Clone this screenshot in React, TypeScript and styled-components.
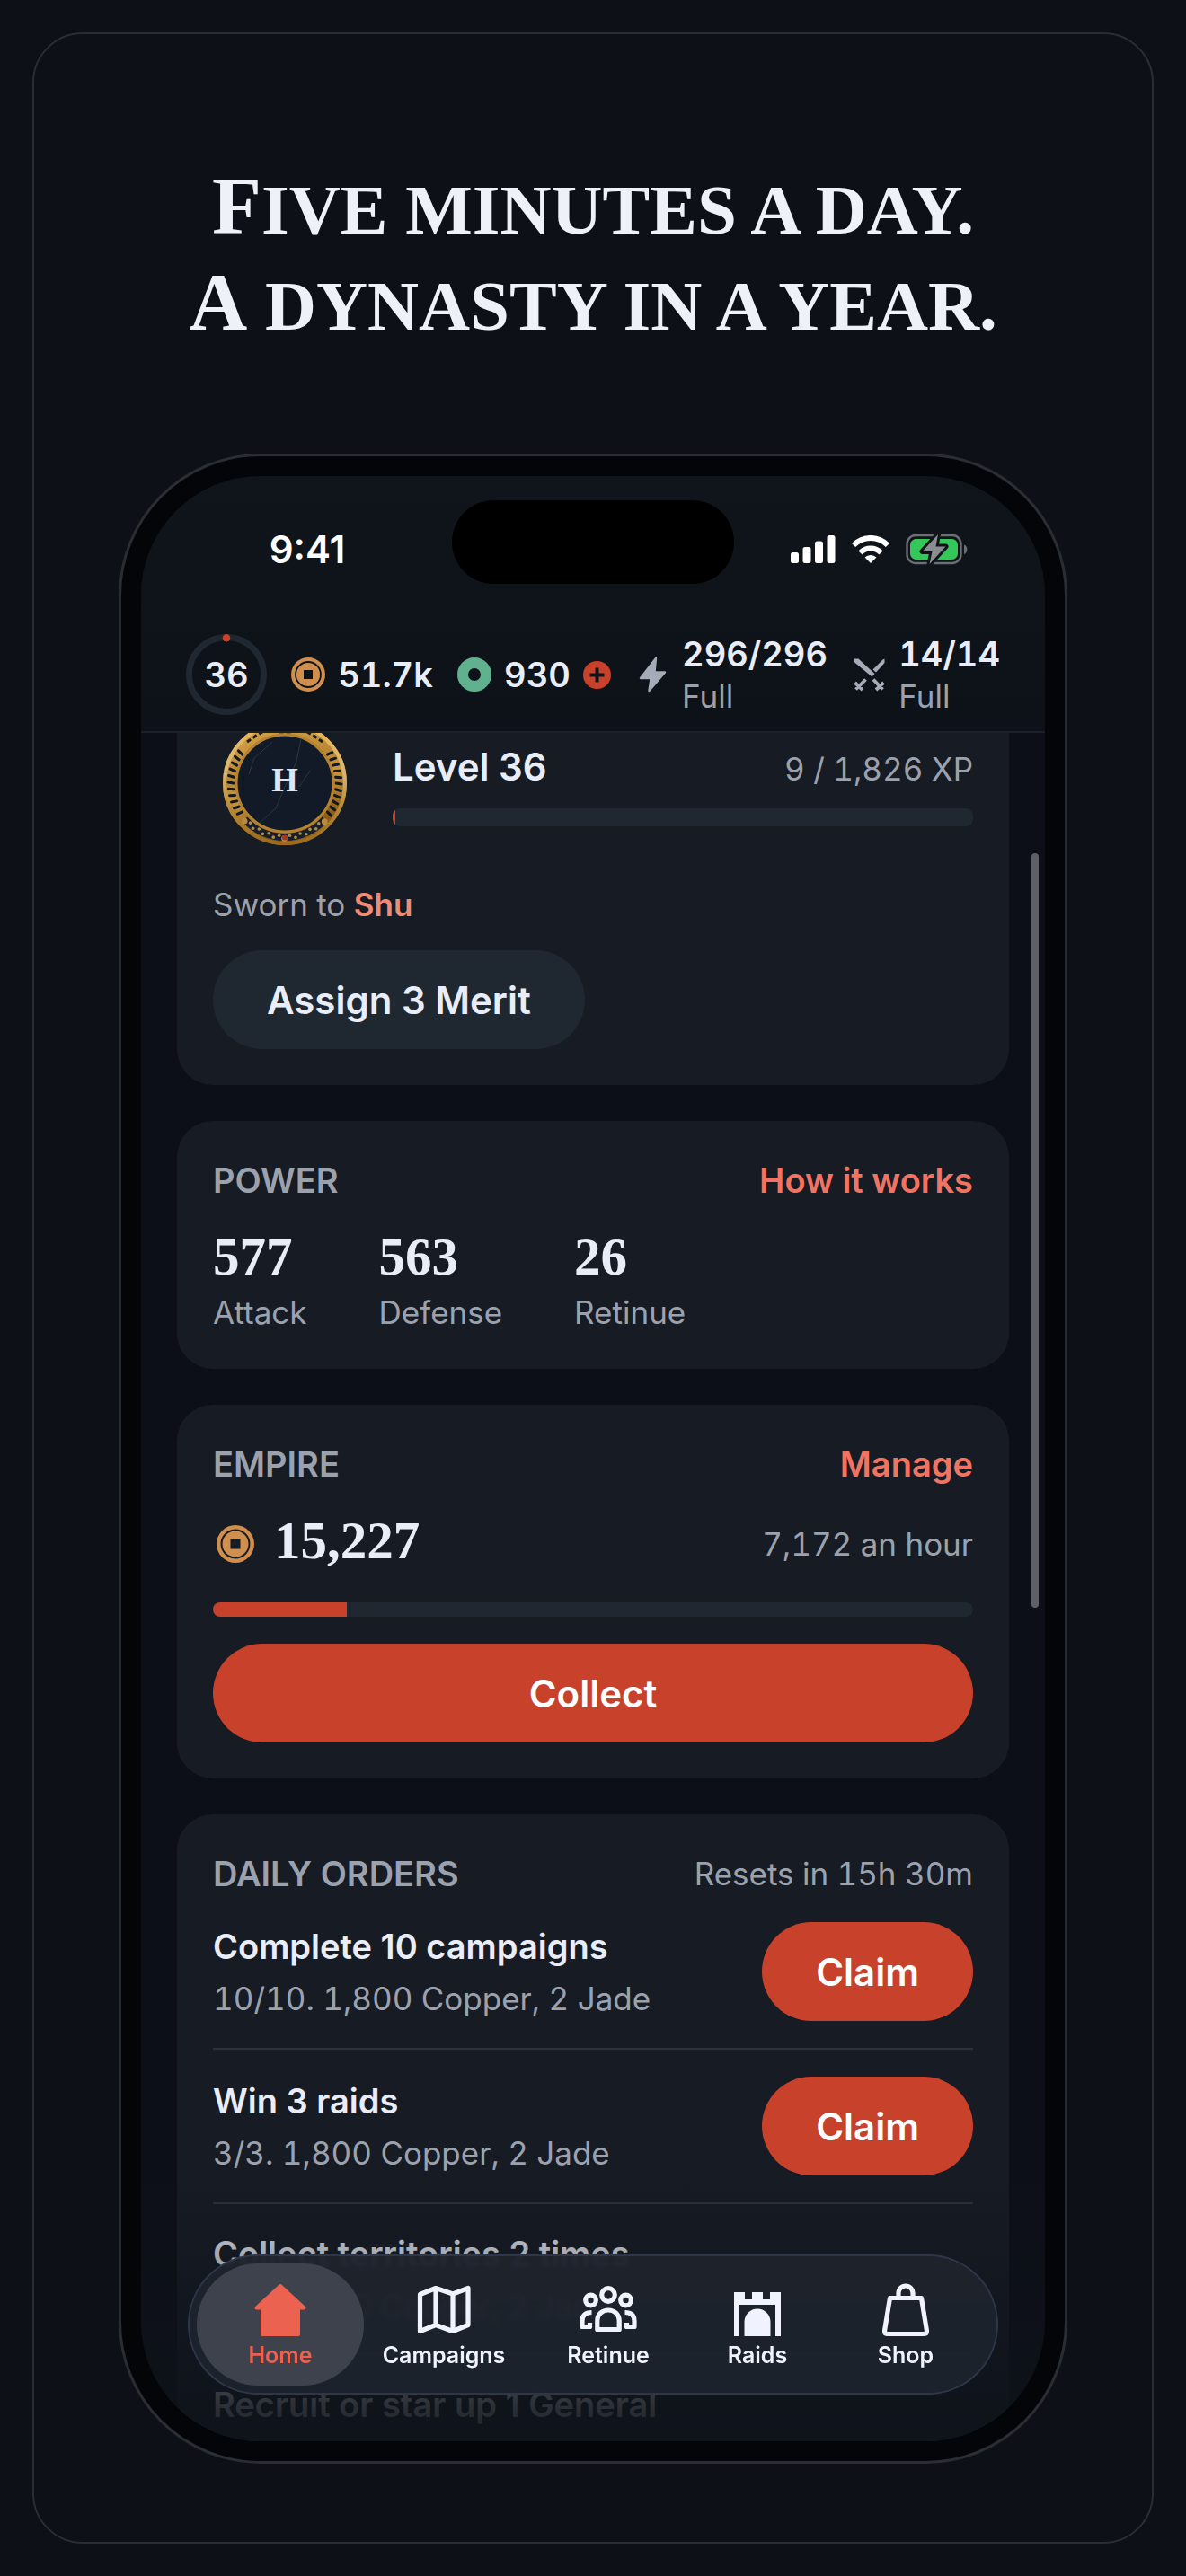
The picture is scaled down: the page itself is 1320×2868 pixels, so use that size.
import React from "react";
import styled, { createGlobalStyle } from "styled-components";

const color = {
  page: "#0d1017",
  frame: "#2a2d33",
  bezel: "#040508",
  bar: "#0e1219",
  screen: "#0c0f17",
  card: "#171b24",
  raised: "#1f2831",
  line: "#2c323b",
  text: "#e9edf7",
  muted: "#9ba2ae",
  accent: "#c8412b",
  link: "#f07461",
  copper: "#d08f4d",
  jade: "#5fb28d",
};

const sans = `Inter, "Liberation Sans", sans-serif`;
const serif = `"Liberation Serif", "Times New Roman", serif`;

const GlobalStyle = createGlobalStyle`
  *, *::before, *::after { box-sizing: border-box; }
  body { margin: 0; background: ${color.page}; font-family: ${sans}; color: ${color.text}; }
  h1, h2, h3, p, ul { margin: 0; padding: 0; }
  ul { list-style: none; }
  button { border: 0; padding: 0; background: none; color: inherit; font: inherit; cursor: pointer; }
  a { color: inherit; text-decoration: none; }
  svg { display: block; flex: none; }
`;

const Page = styled.main`
  display: flex;
  min-height: 100vh;
  padding: 36px;
`;

const Frame = styled.section`
  flex: 1;
  display: flex;
  flex-direction: column;
  align-items: center;
  gap: 111px;
  min-width: 0;
  padding: 142px 60px 84px;
  border: 2px solid ${color.frame};
  border-radius: 56px;
`;

const Headline = styled.h1`
  font-family: ${serif};
  font-size: 79px;
  line-height: 107px;
  font-weight: 700;
  text-align: center;
  text-transform: uppercase;
  color: #eef1f8;
`;

const HeadlineLine = styled.span`
  display: block;
  &::first-letter {
    font-size: 90px;
    line-height: 1;
  }
`;

const Phone = styled.div`
  width: 100%;
  max-width: 1056px;
  padding: 22px;
  border: 3px solid ${color.frame};
  border-radius: 158px;
  background: ${color.bezel};
`;

const Screen = styled.div`
  position: relative;
  display: flex;
  flex-direction: column;
  aspect-ratio: 1006 / 2188;
  overflow: hidden;
  border-radius: 133px;
  background: ${color.screen};
`;

const TopBar = styled.header`
  flex: none;
  padding-bottom: 4px;
  border-bottom: 2px solid #1c2129;
  background: linear-gradient(#10141b, #0d1118);
`;

const StatusBar = styled.div`
  display: grid;
  grid-template-columns: 1fr 314px 1fr;
  justify-items: center;
  align-items: center;
  height: 162px;
  padding: 0 24px;
`;

const Clock = styled.time`
  font-size: 42px;
  font-weight: 600;
  color: #fff;
`;

const Island = styled.div`
  align-self: start;
  width: 100%;
  height: 93px;
  margin-top: 27px;
  border-radius: 47px;
  background: #000;
`;

const StatusIcons = styled.div`
  display: flex;
  align-items: center;
  gap: 18px;
`;

const Stats = styled.div`
  display: flex;
  align-items: center;
  justify-content: space-between;
  height: 118px;
  padding: 0 50px;
`;

const Stat = styled.div`
  display: flex;
  align-items: center;
  gap: 14px;
`;

const StatValue = styled.div`
  font-size: 38px;
  line-height: 48px;
  font-weight: 600;
  font-variant-numeric: tabular-nums;
`;

const Muted = styled.div`
  font-size: 35px;
  line-height: 46px;
  font-weight: 400;
  color: ${color.muted};
  font-variant-numeric: tabular-nums;
`;

const LevelRing = styled.div`
  display: grid;
  place-items: center;
  > * { grid-area: 1 / 1; }
`;

const Viewport = styled.div`
  flex: 1;
  min-height: 0;
  overflow: hidden;
`;

const Scrolled = styled.div`
  display: flex;
  flex-direction: column;
  gap: 40px;
  margin-top: -64px;
  padding: 0 40px;
`;

const Card = styled.section`
  padding: 40px;
  border-radius: 40px;
  background: ${color.card};
`;

const ProfileCard = styled(Card)`
  display: flex;
  flex-direction: column;
  align-items: flex-start;
  gap: 28px;
`;

const Profile = styled.div`
  display: flex;
  align-items: center;
  gap: 40px;
  width: 100%;
`;

const ProfileInfo = styled.div`
  flex: 1;
  display: flex;
  flex-direction: column;
  gap: 20px;
`;

const Split = styled.div`
  display: flex;
  align-items: baseline;
  justify-content: space-between;
`;

const LevelName = styled.h2`
  font-size: 42px;
  line-height: 52px;
  font-weight: 600;
`;

const Track = styled.div<{ $tall?: boolean }>`
  height: ${(p) => (p.$tall ? 20 : 16)}px;
  overflow: hidden;
  border-radius: 8px;
  background: ${color.raised};
`;

const Fill = styled.div`
  height: 100%;
  background: ${color.accent};
`;

const Allegiance = styled.strong`
  font-weight: 600;
  color: #f08b76;
`;

const Button = styled.button<{ $quiet?: boolean; $wide?: boolean }>`
  flex: none;
  width: ${(p) => (p.$wide ? "100%" : "auto")};
  height: 110px;
  padding: 0 60px;
  border-radius: 55px;
  background: ${(p) => (p.$quiet ? color.raised : color.accent)};
  color: ${(p) => (p.$quiet ? color.text : "#fff")};
  font-size: 42px;
  font-weight: 600;
`;

const CardHead = styled.div`
  display: flex;
  align-items: center;
  justify-content: space-between;
  margin-bottom: 28px;
`;

const CardTitle = styled.h2`
  font-size: 38px;
  line-height: 52px;
  font-weight: 600;
  color: ${color.muted};
  text-transform: uppercase;
`;

const CardLink = styled.a`
  font-size: 38px;
  line-height: 52px;
  font-weight: 600;
  color: ${color.link};
`;

const Figures = styled.ul`
  display: flex;
  gap: 80px;
`;

const Figure = styled.li`
  display: flex;
  flex-direction: column;
  gap: 8px;
`;

const BigNumber = styled.div`
  font-family: ${serif};
  font-size: 59px;
  line-height: 62px;
  font-weight: 700;
`;

const Stack = styled.div`
  display: flex;
  flex-direction: column;
  gap: 30px;
`;

const Income = styled.div`
  display: flex;
  align-items: center;
  gap: 22px;
  padding-left: 4px;
  ${BigNumber} { padding-bottom: 8px; }
  ${Muted} { margin-left: auto; }
`;

const Orders = styled.ul`
  display: flex;
  flex-direction: column;
`;

const Order = styled.li`
  display: flex;
  align-items: center;
  justify-content: space-between;
  padding-bottom: 30px;
  & + & {
    padding-top: 30px;
    border-top: 2px solid ${color.line};
  }
`;

const OrderText = styled.div`
  display: flex;
  flex-direction: column;
  gap: 10px;
`;

const OrderName = styled.h3`
  font-size: 38px;
  line-height: 50px;
  font-weight: 600;
`;

const ScrollThumb = styled.div`
  position: absolute;
  top: 420px;
  right: 7px;
  width: 8px;
  height: 840px;
  border-radius: 4px;
  background: #5d6066;
`;

const Fade = styled.div`
  position: absolute;
  inset: auto 0 0;
  height: 300px;
  background: linear-gradient(
    rgba(14, 18, 25, 0),
    rgba(14, 18, 25, 0.3) 30%,
    rgba(14, 18, 25, 0.86) 86%,
    rgba(14, 18, 25, 0.95)
  );
  pointer-events: none;
`;

const TabBar = styled.nav`
  position: absolute;
  inset: auto 52px 52px;
  display: grid;
  grid-template-columns: 186fr 178fr 188fr 144fr 186fr;
  height: 156px;
  padding: 8px;
  border: 2px solid #2e3749;
  border-radius: 78px;
  background: rgba(30, 35, 44, 0.95);
  backdrop-filter: blur(2px);
`;

const Tab = styled.a<{ $active?: boolean }>`
  display: flex;
  flex-direction: column;
  align-items: center;
  justify-content: center;
  gap: 4px;
  padding-top: 4px;
  border-radius: 68px;
  background: ${(p) => (p.$active ? "#3d424c" : "transparent")};
  color: ${(p) => (p.$active ? "#eb6250" : "#f0f3fd")};
  font-size: 25px;
  line-height: 32px;
  font-weight: 600;
`;

/* ---------- drawings ---------- */

const Signal = () => (
  <svg width="50" height="31" viewBox="0 0 50 31" fill="#fff" aria-hidden="true">
    <rect x="0" y="19" width="9" height="12" rx="2.5" />
    <rect x="13.5" y="13" width="9" height="18" rx="2.5" />
    <rect x="27" y="6.5" width="9" height="24.5" rx="2.5" />
    <rect x="40.5" y="0" width="9" height="31" rx="2.5" />
  </svg>
);

const Wifi = () => (
  <svg width="42" height="31" viewBox="0 0 42 31" aria-hidden="true">
    <g fill="none" stroke="#fff" strokeWidth="6">
      <path d="M2 11 A26.5 26.5 0 0 1 40 11" />
      <path d="M9.5 19.5 A16 16 0 0 1 32.5 19.5" />
    </g>
    <path d="M21 31 L14.5 24.6 A9.2 9.2 0 0 1 27.5 24.6 Z" fill="#fff" />
  </svg>
);

const Battery = () => (
  <svg width="69" height="35" viewBox="0 0 69 35" aria-hidden="true">
    <rect x="1.5" y="2" width="60" height="31" rx="9.5" fill="none" stroke="#6b6e73" strokeWidth="2.4" />
    <path d="M65 12.5 C69.5 14 69.5 21.500 65 23 Z" fill="#6b6e73" />
    <rect x="5" y="6" width="53" height="23" rx="6.5" fill="#34c759" />
    <path
      d="M36 1 L18.5 20 H29.500 L26.500 34 L44.500 14.500 H33.500 Z"
      fill="#8b8e91"
      stroke="#0f131a"
      strokeWidth="6"
      strokeLinejoin="round"
      paintOrder="stroke"
    />
  </svg>
);

const Copper = ({ size, hole }: { size: number; hole: string }) => (
  <svg width={size} height={size} viewBox="0 0 38 38" aria-hidden="true">
    <circle cx="19" cy="19" r="19" fill={color.copper} />
    <circle cx="19" cy="19" r="14" fill="none" stroke={hole} strokeWidth="1.8" />
    <rect x="14" y="14" width="10" height="10" fill={hole} />
  </svg>
);

const Jade = () => (
  <svg width="38" height="38" viewBox="0 0 38 38" aria-hidden="true">
    <circle cx="19" cy="19" r="13" fill="none" stroke={color.jade} strokeWidth="12" />
  </svg>
);

const Plus = () => (
  <svg width="31" height="31" viewBox="0 0 31 31" aria-hidden="true">
    <circle cx="15.5" cy="15.5" r="15.5" fill={color.accent} />
    <path d="M15.5 7.5 V23.5 M7.5 15.5 H23.5" stroke={color.bar} strokeWidth="4" />
  </svg>
);

const Bolt = () => (
  <svg width="38" height="40" viewBox="0 0 38 40" aria-hidden="true">
    <path
      d="M23 2 L6 24 H17.500 L15.500 38 L33 17.500 H21.500 Z"
      fill="#a5abb7"
      stroke="#a5abb7"
      strokeWidth="2.4"
      strokeLinejoin="round"
    />
  </svg>
);

const Swords = () => (
  <svg width="38" height="38" viewBox="0 0 38 38" aria-hidden="true">
    <path d="M2.500 1.500 H7.500 L25.500 18 L22.500 21.500 L2.500 5 Z" fill="#a5abb7" />
    <path d="M36.500 1.500 V6 L27 16.500 L23.500 13.500 L34.500 2.500 Z" fill="#a5abb7" />
    <path
      d="M15.500 24.500 L4.500 35.500 M3.500 28 L12 36 M24 24.500 L34.500 35.500 M35.500 28 L27 36"
      fill="none"
      stroke="#a5abb7"
      strokeWidth="3.800"
    />
  </svg>
);

const Ring = () => (
  <svg width="90" height="90" viewBox="0 0 90 90" aria-hidden="true">
    <circle cx="45" cy="45" r="41.5" fill="none" stroke={color.raised} strokeWidth="7" />
    <circle cx="45" cy="4.2" r="4.2" fill={color.accent} />
  </svg>
);

const spokes = Array.from({ length: 11 }, (_, i) => -34 + i * 6.8);
const leaves = Array.from({ length: 17 }, (_, i) => 44 + i * 5.8);

const polar = (deg: number, r: number) => {
  const a = (deg * Math.PI) / 180;
  return { x: 80 + r * Math.cos(a), y: 80 + r * Math.sin(a) };
};

const Spoke = ({ deg }: { deg: number }) => {
  const a = polar(deg, 57);
  const b = polar(deg + 1, 63);
  return <line x1={a.x} y1={a.y} x2={b.x} y2={b.y} stroke="#121820" strokeWidth="3" strokeLinecap="round" />;
};

const Medallion = () => (
  <svg width="160" height="164" viewBox="0 0 160 164" role="img" aria-label="House H">
    <defs>
      <linearGradient id="gold" x1="0" y1="0" x2="0.3" y2="1">
        <stop offset="0" stopColor="#d9a347" />
        <stop offset="0.45" stopColor="#b88737" />
        <stop offset="0.6" stopColor="#c9983d" />
        <stop offset="1" stopColor="#8a5a18" />
      </linearGradient>
      <linearGradient id="rim" x1="0" y1="0" x2="0" y2="1">
        <stop offset="0" stopColor="#e9b751" />
        <stop offset="0.4" stopColor="#d8b877" />
        <stop offset="0.7" stopColor="#b98a35" />
        <stop offset="1" stopColor="#9b6a20" />
      </linearGradient>
    </defs>
    <circle cx="80" cy="80" r="61" fill="#111a26" stroke="url(#gold)" strokeWidth="16" />
    {spokes.map((d) => (
      <g key={d}>
        <Spoke deg={d} />
        <Spoke deg={180 - d} />
      </g>
    ))}
    <path
      d={`M${polar(42, 60).x} ${polar(42, 60).y} A60 60 0 0 1 ${polar(138, 60).x} ${polar(138, 60).y}`}
      fill="none"
      stroke="#15202b"
      strokeWidth="8"
    />
    {leaves.map((d, i) => {
      const p = polar(d, i % 2 ? 58.5 : 61.5);
      return <circle key={d} cx={p.x} cy={p.y} r={i % 8 === 0 ? 3.4 : 1.8} fill="#b88a43" />;
    })}
    <circle cx="80" cy="140.5" r="3" fill="#a03a24" />
    <path d="M38 34 L48 27 L60 20 L72 23 H88 L100 20 L112 27 L122 34" fill="none" stroke="#1c1c1c" strokeWidth="3" strokeDasharray="5 3" />
    <circle cx="80" cy="80" r="67" fill="none" stroke="url(#rim)" strokeWidth="4" />
    <circle cx="80" cy="80" r="54" fill="none" stroke="#b5822f" strokeWidth="3" />
    <path
      d="M98 30 L93 56 L80 84 L70 108 L52 124 M66 34 L46 52 L40 70 M108 66 L96 84"
      fill="none"
      stroke="#2b3846"
      strokeWidth="1"
    />
    <text x="80" y="89" textAnchor="middle" fontFamily={serif} fontSize="38" fontWeight="700" fill="#dfe6f3">
      H
    </text>
  </svg>
);

const Home = () => (
  <svg width="60" height="60" viewBox="0 0 60 60" fill="currentColor" stroke="currentColor" strokeWidth="4" strokeLinejoin="round" aria-hidden="true">
    <path d="M30 3 L56.5 27.5 H50 V57 H10 V27.5 H3.5 Z" />
  </svg>
);

const MapIcon = () => (
  <svg width="60" height="60" viewBox="0 0 60 60" fill="none" stroke="currentColor" strokeWidth="5.2" strokeLinejoin="round" aria-hidden="true">
    <path d="M3.5 12.5 L21 5.5 L40 12 L57 5.5 V46.5 L40 53.5 L21 46.5 L3.5 53.5 Z M21 5.5 V46.5 M40 12 V53.5" />
  </svg>
);

const Retinue = () => (
  <svg width="64" height="60" viewBox="0 0 64 60" fill="none" stroke="currentColor" strokeWidth="5.2" strokeLinejoin="round" aria-hidden="true">
    <circle cx="32" cy="13" r="7.3" />
    <circle cx="12.5" cy="19" r="5.8" />
    <circle cx="51.5" cy="19" r="5.8" />
    <path d="M19.8 51.5 V42 C19.8 26 44.2 26 44.2 42 V51.5 Z" />
    <path d="M13.5 32.5 C6 32.5 3 36 3 42 V48.5 H11.5 V44" />
    <path d="M50.5 32.5 C58 32.5 61 36 61 42 V48.5 H52.5 V44" />
  </svg>
);

const Castle = () => (
  <svg width="52" height="60" viewBox="0 0 52 60" fill="currentColor" aria-hidden="true">
    <path d="M0 10 H12 V18 H20 V10 H32 V18 H40 V10 H52 V59 H46 V24 H6 V59 H0 Z" />
    <path d="M11.5 59 V43 A14.5 14.5 0 0 1 40.5 43 V59 Z" />
  </svg>
);

const Bag = () => (
  <svg width="52" height="60" viewBox="0 0 52 60" fill="none" stroke="currentColor" strokeWidth="5.2" strokeLinejoin="round" aria-hidden="true">
    <path d="M8.5 16.5 H43.5 L49.5 53 Q49.5 56.5 46 56.5 H6 Q2.5 56.500 2.500 53 Z" />
    <path d="M18 16.5 V11 A8 8 0 0 1 34 11 V16.5" />
  </svg>
);

/* ---------- data ---------- */

const power = [
  { value: "577", label: "Attack" },
  { value: "563", label: "Defense" },
  { value: "26", label: "Retinue" },
];

const orders = [
  { name: "Complete 10 campaigns", detail: "10/10. 1,800 Copper, 2 Jade", done: true },
  { name: "Win 3 raids", detail: "3/3. 1,800 Copper, 2 Jade", done: true },
  { name: "Collect territories 2 times", detail: "0/2. 1,800 Copper, 2 Jade", done: false },
  { name: "Recruit or star up 1 General", detail: "", done: false },
];

const tabs = [
  { label: "Home", Icon: Home },
  { label: "Campaigns", Icon: MapIcon },
  { label: "Retinue", Icon: Retinue },
  { label: "Raids", Icon: Castle },
  { label: "Shop", Icon: Bag },
];

const xp = { now: 9, goal: 1826 };
const vault = { filled: 0.176 };

const percent = (share: number) => `${share * 100}%`;

export default function App() {
  return (
    <>
      <GlobalStyle />
      <Page>
        <Frame>
          <Headline>
            <HeadlineLine>Five minutes a day.</HeadlineLine>
            <HeadlineLine>A dynasty in a year.</HeadlineLine>
          </Headline>

          <Phone>
            <Screen>
              <TopBar>
                <StatusBar>
                  <Clock>9:41</Clock>
                  <Island />
                  <StatusIcons>
                    <Signal />
                    <Wifi />
                    <Battery />
                  </StatusIcons>
                </StatusBar>
                <Stats>
                  <LevelRing>
                    <Ring />
                    <StatValue>36</StatValue>
                  </LevelRing>
                  <Stat>
                    <Copper size={38} hole={color.bar} />
                    <StatValue>51.7k</StatValue>
                  </Stat>
                  <Stat>
                    <Jade />
                    <StatValue>930</StatValue>
                    <button type="button" aria-label="Get more jade">
                      <Plus />
                    </button>
                  </Stat>
                  <Stat>
                    <Bolt />
                    <div>
                      <StatValue>296/296</StatValue>
                      <Muted>Full</Muted>
                    </div>
                  </Stat>
                  <Stat>
                    <Swords />
                    <div>
                      <StatValue>14/14</StatValue>
                      <Muted>Full</Muted>
                    </div>
                  </Stat>
                </Stats>
              </TopBar>

              <Viewport>
                <Scrolled>
                  <ProfileCard>
                    <Profile>
                      <Medallion />
                      <ProfileInfo>
                        <Split>
                          <LevelName>Level 36</LevelName>
                          <Muted>9 / 1,826 XP</Muted>
                        </Split>
                        <Track $tall>
                          <Fill style={{ width: percent(xp.now / xp.goal) }} />
                        </Track>
                      </ProfileInfo>
                    </Profile>
                    <Muted>
                      Sworn to <Allegiance>Shu</Allegiance>
                    </Muted>
                    <Button type="button" $quiet>
                      Assign 3 Merit
                    </Button>
                  </ProfileCard>

                  <Card>
                    <CardHead>
                      <CardTitle>Power</CardTitle>
                      <CardLink href="#power">How it works</CardLink>
                    </CardHead>
                    <Figures>
                      {power.map((p) => (
                        <Figure key={p.label}>
                          <BigNumber>{p.value}</BigNumber>
                          <Muted>{p.label}</Muted>
                        </Figure>
                      ))}
                    </Figures>
                  </Card>

                  <Card>
                    <CardHead>
                      <CardTitle>Empire</CardTitle>
                      <CardLink href="#empire">Manage</CardLink>
                    </CardHead>
                    <Stack>
                      <Income>
                        <Copper size={42} hole={color.card} />
                        <BigNumber>15,227</BigNumber>
                        <Muted>7,172 an hour</Muted>
                      </Income>
                      <Track>
                        <Fill style={{ width: percent(vault.filled) }} />
                      </Track>
                      <Button type="button" $wide>
                        Collect
                      </Button>
                    </Stack>
                  </Card>

                  <Card>
                    <CardHead>
                      <CardTitle>Daily orders</CardTitle>
                      <Muted>Resets in 15h 30m</Muted>
                    </CardHead>
                    <Orders>
                      {orders.map((o) => (
                        <Order key={o.name}>
                          <OrderText>
                            <OrderName>{o.name}</OrderName>
                            {o.detail && <Muted>{o.detail}</Muted>}
                          </OrderText>
                          {o.done && <Button type="button">Claim</Button>}
                        </Order>
                      ))}
                    </Orders>
                  </Card>
                </Scrolled>
              </Viewport>

              <ScrollThumb />
              <Fade />
              <TabBar aria-label="Main">
                {tabs.map(({ label, Icon }, i) => (
                  <Tab key={label} href={`#${label.toLowerCase()}`} $active={i === 0}>
                    <Icon />
                    {label}
                  </Tab>
                ))}
              </TabBar>
            </Screen>
          </Phone>
        </Frame>
      </Page>
    </>
  );
}
